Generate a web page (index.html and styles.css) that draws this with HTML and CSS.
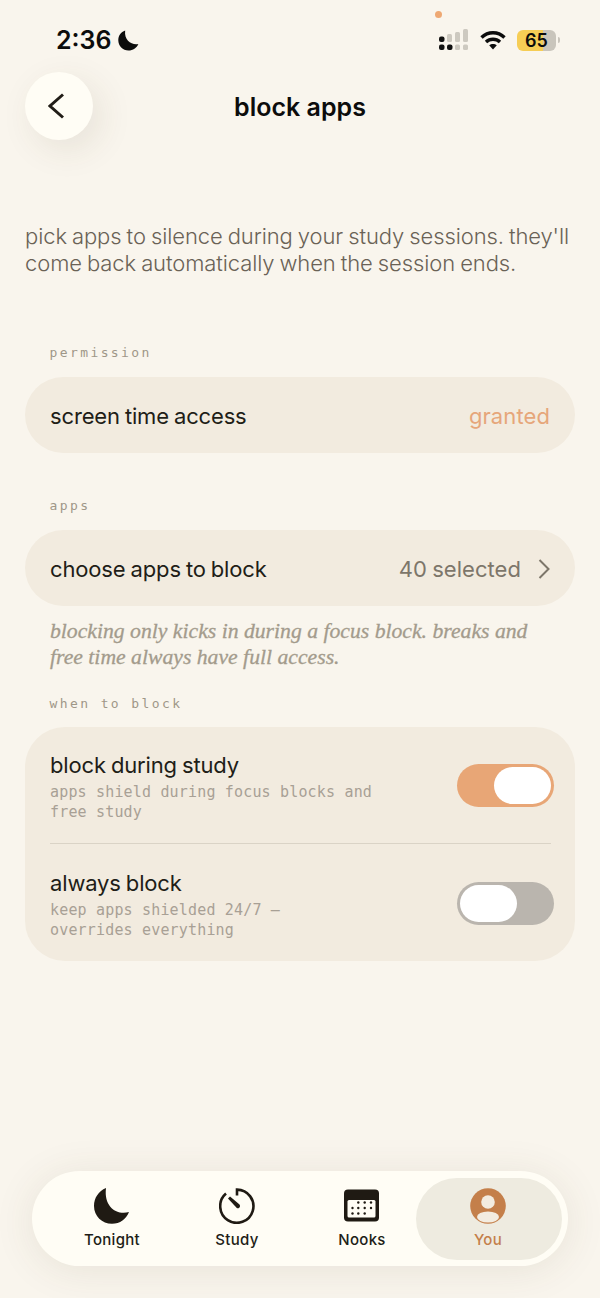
FILE: index.html
```html
<!DOCTYPE html>
<html lang="en">

<head>
    <meta charset="UTF-8">
    <meta name="viewport" content="width=device-width, initial-scale=1.0">
    <title>block apps</title>
    <link rel="stylesheet" href="styles.css">
</head>

<body>
    <div class="screen">
        <span class="mic-dot"></span>

        <div class="status">
            <div class="status-left">
                <span class="time">2:36</span>
                <svg class="status-moon" viewBox="0 0 22 22">
                    <path d="M7.5 0.5C3 2 0.3 6 0.3 10.8 0.3 16.8 5 21.5 11 21.5 15.6 21.5 19.6 18.7 21.3 14.6 14.5 16 6.2 11 7.5 0.5Z" />
                </svg>
            </div>
            <div class="status-right">
                <svg class="signal" viewBox="0 0 32 22">
                    <rect x="1" y="7.5" width="5.5" height="5.5" rx="2" fill="#111" />
                    <rect x="1" y="15.5" width="5.5" height="5.5" rx="2" fill="#111" />
                    <rect x="9" y="5" width="5" height="8" rx="1.5" fill="#cdc9c0" />
                    <rect x="9" y="15.5" width="5.5" height="5.5" rx="2" fill="#111" />
                    <rect x="17" y="3" width="5" height="10" rx="1.5" fill="#cdc9c0" />
                    <rect x="17" y="15.5" width="5" height="5.5" rx="1.5" fill="#cdc9c0" />
                    <rect x="25" y="0" width="5" height="13" rx="1.5" fill="#cdc9c0" />
                    <rect x="25" y="15.5" width="5" height="5.5" rx="1.5" fill="#cdc9c0" />
                </svg>
                <svg class="wifi" viewBox="0 0 26 20">
                    <path d="M1.5 7.5C8 1.2 18 1.2 24.5 7.5" />
                    <path d="M6 12C10 8.3 16 8.3 20 12" />
                    <path class="wifi-tip" d="M9.2 15.2C11.3 13.5 14.7 13.5 16.8 15.2L13 19.5Z" />
                </svg>
                <div class="battery">
                    <div class="battery-body"><span>65</span></div>
                    <span class="battery-nub"></span>
                </div>
            </div>
        </div>

        <div class="header">
            <button class="back">
                <svg viewBox="0 0 18 26">
                    <path d="M15 1.5L2 13 15 24.5" />
                </svg>
            </button>
            <h1>block apps</h1>
        </div>

        <p class="intro">pick apps to silence during your study sessions. they'll come back automatically when the session ends.</p>

        <div class="label label-permission">permission</div>
        <div class="row">
            <span>screen time access</span>
            <span class="granted">granted</span>
        </div>

        <div class="label label-apps">apps</div>
        <div class="row">
            <span>choose apps to block</span>
            <span class="selected">
                40 selected
                <svg viewBox="0 0 12 20">
                    <path d="M1.5 1L10.5 10 1.5 19" />
                </svg>
            </span>
        </div>
        <p class="note">blocking only kicks in during a focus block. breaks and free time always have full access.</p>

        <div class="label label-when">when to block</div>
        <div class="card">
            <div class="setting">
                <div class="setting-text">
                    <div class="setting-title">block during study</div>
                    <div class="setting-sub">apps shield during focus blocks and<br>free study</div>
                </div>
                <div class="toggle on"><span class="thumb"></span></div>
            </div>
            <div class="setting setting-last">
                <div class="setting-text">
                    <div class="setting-title">always block</div>
                    <div class="setting-sub">keep apps shielded 24/7 —<br>overrides everything</div>
                </div>
                <div class="toggle"><span class="thumb"></span></div>
            </div>
        </div>

        <div class="tabbar">
            <div class="tab">
                <svg viewBox="0 0 36 36">
                    <path fill="#1f1a13" d="M12 0C4.5 3 0 10 0 18 0 28 8 35.8 18 35.8 26 35.8 32.3 31 35 24 24 27.5 9.5 20 12 0Z" />
                </svg>
                <span>Tonight</span>
            </div>
            <div class="tab">
                <svg viewBox="0 0 36 36">
                    <path fill="none" stroke="#1f1a13" stroke-width="2.6" d="M18 7.5V1.6A16.6 16.6 0 1 1 7 5.6" />
                    <path fill="#1f1a13" d="M9 10.5L11 8.5 20.5 16.5C22 18.5 20 21 17.8 20Z" />
                </svg>
                <span>Study</span>
            </div>
            <div class="tab">
                <svg viewBox="0 0 36 33">
                    <rect width="35" height="32" rx="4" fill="#1f1a13" />
                    <rect x="3.5" y="10.5" width="28" height="17.5" rx="1.5" fill="#fffdf5" />
                    <g fill="#1f1a13">
                        <circle cx="14.3" cy="13" r="1.2" />
                        <circle cx="20.7" cy="13" r="1.2" />
                        <circle cx="27" cy="13" r="1.2" />
                        <circle cx="8.5" cy="18.5" r="1.2" />
                        <circle cx="14.3" cy="18.5" r="1.2" />
                        <circle cx="20.7" cy="18.5" r="1.2" />
                        <circle cx="27" cy="18.5" r="1.2" />
                        <circle cx="8.5" cy="24" r="1.2" />
                        <circle cx="14.3" cy="24" r="1.2" />
                        <circle cx="20.7" cy="24" r="1.2" />
                    </g>
                </svg>
                <span>Nooks</span>
            </div>
            <div class="tab tab-active">
                <svg viewBox="0 0 36 36">
                    <circle cx="18" cy="18" r="17.8" fill="#c47f4a" />
                    <circle cx="18" cy="14" r="6.8" fill="#f3ece0" />
                    <ellipse cx="18" cy="29" rx="11" ry="5.6" fill="#f3ece0" />
                </svg>
                <span>You</span>
            </div>
        </div>
    </div>
</body>

</html>
```

FILE: styles.css
```css
* {
    box-sizing: border-box;
}

body {
    margin: 0;
    background-color: #f9f5ed;
    color: #211d17;
    font-family: "Inter", "Liberation Sans", sans-serif;
}

.screen {
    position: relative;
    display: flex;
    flex-direction: column;
    height: 1298px;
    padding: 0 25px;
    overflow: hidden;
}

.mic-dot {
    position: absolute;
    top: 11px;
    left: 435px;
    width: 7px;
    height: 7px;
    border-radius: 50%;
    background-color: #eea873;
}

/* status bar */
.status {
    display: flex;
    justify-content: space-between;
    align-items: center;
    height: 72px;
    padding: 8px 15px 0 31px;
    color: #0c0c0c;
}

.status-left {
    display: flex;
    align-items: center;
    gap: 7px;
}

.time {
    font-size: 25px;
    font-weight: 600;
}

.status-moon {
    width: 21px;
    height: 21px;
    fill: #0c0c0c;
}

.status-right {
    display: flex;
    align-items: center;
}

.signal {
    width: 32px;
    height: 22px;
    margin-right: 10px;
}

.wifi {
    width: 26px;
    height: 20px;
    margin-right: 11px;
    fill: none;
    stroke: #0c0c0c;
    stroke-width: 3.4;
}

.wifi-tip {
    fill: #0c0c0c;
    stroke: none;
}

.battery {
    display: flex;
    align-items: center;
    gap: 2px;
}

.battery-body {
    display: flex;
    justify-content: center;
    align-items: center;
    width: 39px;
    height: 21px;
    border-radius: 6px;
    background: linear-gradient(90deg, #f6cd55 66%, #c9c5bc 66%);
    font-size: 18px;
    font-weight: 600;
}

.battery-nub {
    width: 2px;
    height: 6px;
    border-radius: 0 2px 2px 0;
    background-color: #c9c5bc;
}

/* header */
.header {
    display: flex;
    align-items: center;
    height: 68px;
}

.back {
    display: flex;
    justify-content: center;
    align-items: center;
    flex-shrink: 0;
    width: 68px;
    height: 68px;
    padding: 0 4px 0 0;
    border: none;
    border-radius: 50%;
    background-color: #fffdf5;
    box-shadow: 8px 10px 34px rgba(80, 65, 40, 0.1);
}

.back svg {
    width: 18px;
    height: 26px;
    fill: none;
    stroke: #211d17;
    stroke-width: 3;
}

h1 {
    flex: 1;
    margin: 2px 68px 0 0;
    text-align: center;
    font-size: 25px;
    font-weight: 600;
    color: #0c0c0c;
}

.intro {
    margin: 83px 0 0;
    font-size: 22px;
    font-weight: 300;
    line-height: 27px;
    letter-spacing: -0.1px;
    word-spacing: -1px;
    color: #6a6256;
}

/* sections */
.label {
    padding-left: 24.5px;
    font-family: "DejaVu Sans Mono", "Liberation Mono", monospace;
    font-size: 13px;
    line-height: 16px;
    letter-spacing: 2.4px;
    color: #9f9788;
}

.label-permission {
    margin-top: 68px;
    margin-bottom: 16px;
}

.label-apps {
    margin-top: 45px;
    margin-bottom: 16px;
}

.label-when {
    margin-top: 26px;
    margin-bottom: 15px;
}

.row {
    display: flex;
    justify-content: space-between;
    align-items: center;
    height: 76px;
    padding: 2px 25px 0;
    border-radius: 38px;
    background-color: #f2ebdf;
    font-size: 22px;
    letter-spacing: -0.15px;
    word-spacing: -1px;
}

.granted {
    color: #e6a67a;
    letter-spacing: 0.1px;
}

.selected {
    display: flex;
    align-items: center;
    gap: 17px;
    color: #7d766a;
    letter-spacing: 0.05px;
}

.selected svg {
    width: 12px;
    height: 20px;
    fill: none;
    stroke: #7d766a;
    stroke-width: 2;
}

.note {
    margin: 12px 0 0;
    padding-left: 25px;
    font-family: "Liberation Serif", serif;
    font-style: italic;
    font-size: 21.7px;
    line-height: 26px;
    color: #a39b8c;
    -webkit-text-stroke: 0.3px #a39b8c;
    max-width: 510px;
}

.card {
    border-radius: 40px;
    background-color: #f2ebdf;
    padding: 0 24px 0 25px;
}

.setting {
    display: flex;
    justify-content: space-between;
    align-items: center;
    height: 117px;
    border-bottom: 1px solid #dad3c6;
}

.setting-last {
    padding-top: 1px;
    border-bottom: none;
}

.setting-text {
    padding-top: 3px;
}

.setting-title {
    font-size: 22px;
    line-height: 28px;
    letter-spacing: -0.15px;
    word-spacing: -1px;
}

.setting-sub {
    margin-top: 3px;
    font-family: "DejaVu Sans Mono", "Liberation Mono", monospace;
    font-size: 15px;
    line-height: 20.5px;
    letter-spacing: 0.17px;
    color: #a8a095;
}

.toggle {
    display: flex;
    align-items: center;
    width: 97px;
    height: 43px;
    margin-right: -3px;
    padding: 3px;
    border-radius: 22px;
    background-color: #bab5ae;
}

.toggle.on {
    justify-content: flex-end;
    background-color: #e8a676;
}

.thumb {
    width: 57px;
    height: 37px;
    border-radius: 19px;
    background-color: #fff;
}

/* tab bar */
.tabbar {
    display: flex;
    align-items: center;
    flex-shrink: 0;
    height: 95px;
    margin: auto 7px 32px;
    padding: 0 6px 0 17.5px;
    border-radius: 48px;
    background-color: #fffdf5;
    box-shadow: 0 4px 40px rgba(80, 65, 40, 0.1);
}

.tab {
    display: flex;
    flex-direction: column;
    align-items: center;
    justify-content: center;
    gap: 6px;
    width: 125px;
    height: 82px;
    font-size: 15px;
    font-weight: 500;
    letter-spacing: 0.3px;
}

.tab svg {
    width: 36px;
    height: 36px;
}

.tab-active {
    width: 146px;
    margin-left: -8.5px;
    padding-right: 2px;
    border-radius: 41px;
    background-color: #eeebe0;
    color: #c47f4a;
}
```
